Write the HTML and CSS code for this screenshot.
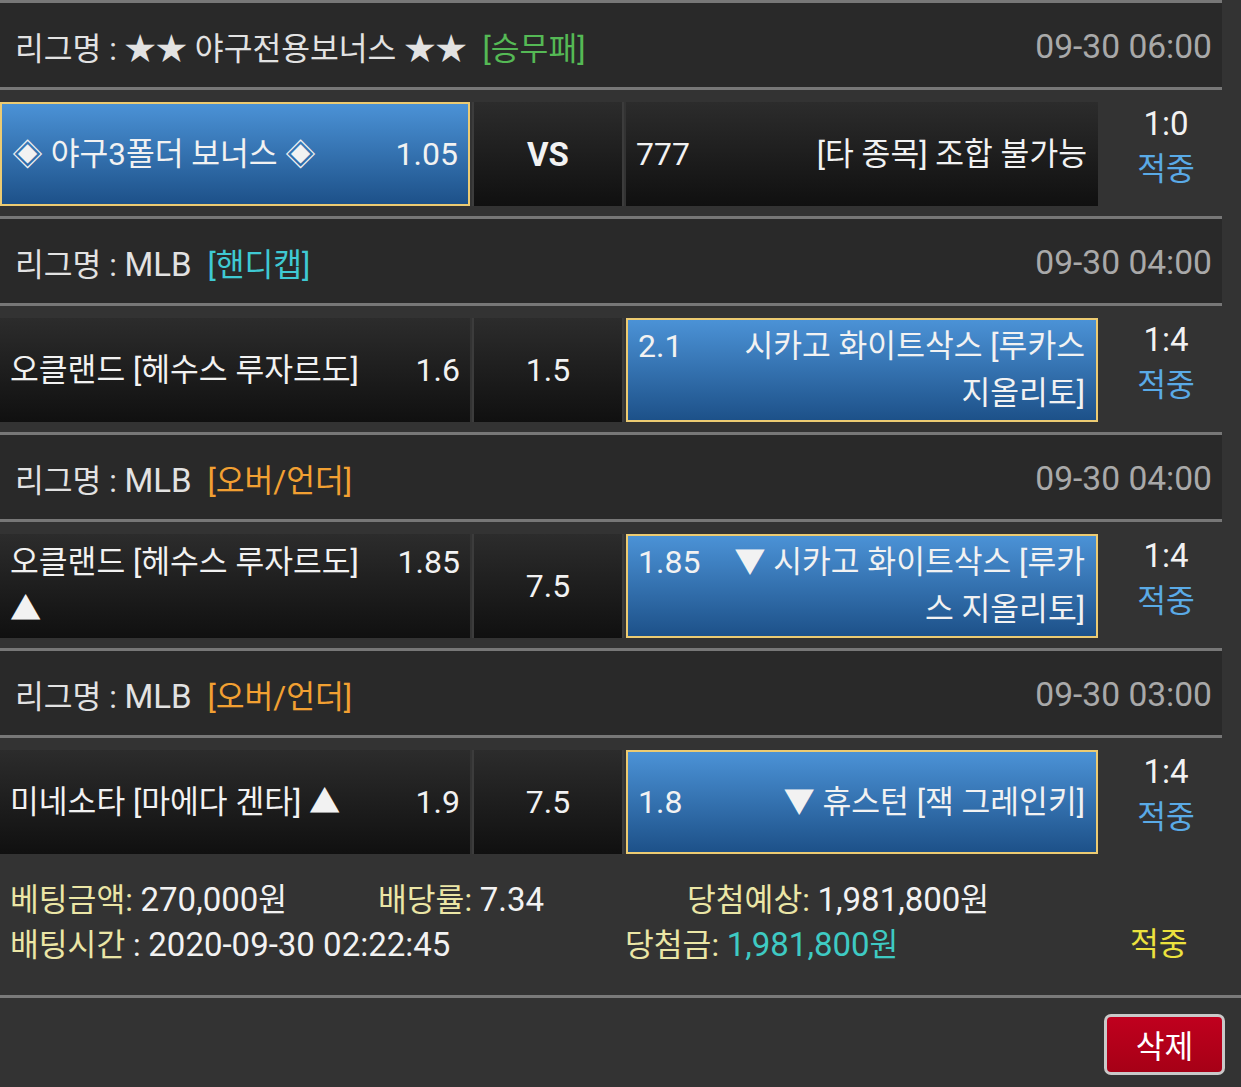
FILE: index.html
```html
<!DOCTYPE html>
<html lang="ko">
<head>
<meta charset="utf-8">
<title>베팅내역</title>
<link rel="stylesheet" href="styles.css">
</head>
<body>
<div class="slip">
  <div class="board">
    <div class="league">
      <div class="league-name">리그명 : ★★ 야구전용보너스 ★★ <span class="tag tag-green">[승무패]</span></div>
      <div class="league-date">09-30 06:00</div>
    </div>
    <div class="game">
      <div class="cell home picked">
        <div class="cell-in"><span class="odds-r">1.05</span>◈ 야구3폴더 보너스 ◈</div>
      </div>
      <div class="cell mid vs">VS</div>
      <div class="cell away">
        <div class="cell-in"><span class="odds-l">777</span>[타 종목] 조합 불가능</div>
      </div>
      <div class="score"><div class="sc">1:0</div><div class="hit">적중</div></div>
    </div>

    <div class="league">
      <div class="league-name">리그명 : <span class="lat">MLB</span> <span class="tag tag-cyan">[핸디캡]</span></div>
      <div class="league-date">09-30 04:00</div>
    </div>
    <div class="game">
      <div class="cell home">
        <div class="cell-in"><span class="odds-r">1.6</span>오클랜드 [헤수스 루자르도]</div>
      </div>
      <div class="cell mid">1.5</div>
      <div class="cell away picked">
        <div class="cell-in"><span class="odds-l">2.1</span>시카고 화이트삭스 [루카스 지올리토]</div>
      </div>
      <div class="score"><div class="sc">1:4</div><div class="hit">적중</div></div>
    </div>

    <div class="league">
      <div class="league-name">리그명 : <span class="lat">MLB</span> <span class="tag tag-orange">[오버/언더]</span></div>
      <div class="league-date">09-30 04:00</div>
    </div>
    <div class="game">
      <div class="cell home">
        <div class="cell-in"><span class="odds-r">1.85</span>오클랜드 [헤수스 루자르도] ▲</div>
      </div>
      <div class="cell mid">7.5</div>
      <div class="cell away picked">
        <div class="cell-in"><span class="odds-l">1.85</span>▼ 시카고 화이트삭스 [루카스 지올리토]</div>
      </div>
      <div class="score"><div class="sc">1:4</div><div class="hit">적중</div></div>
    </div>

    <div class="league">
      <div class="league-name">리그명 : <span class="lat">MLB</span> <span class="tag tag-orange">[오버/언더]</span></div>
      <div class="league-date">09-30 03:00</div>
    </div>
    <div class="game">
      <div class="cell home">
        <div class="cell-in"><span class="odds-r">1.9</span>미네소타 [마에다 겐타] ▲</div>
      </div>
      <div class="cell mid">7.5</div>
      <div class="cell away picked">
        <div class="cell-in"><span class="odds-l">1.8</span>▼ 휴스턴 [잭 그레인키]</div>
      </div>
      <div class="score"><div class="sc">1:4</div><div class="hit">적중</div></div>
    </div>
  </div>

  <div class="summary">
    <div class="sum-line">
      <div class="sum-a"><span class="lbl">베팅금액:</span> <span class="val">270,000</span>원</div>
      <div class="sum-b"><span class="lbl">배당률:</span> <span class="val">7.34</span></div>
      <div class="sum-c"><span class="lbl">당첨예상:</span> <span class="val">1,981,800</span>원</div>
    </div>
    <div class="sum-line">
      <div class="sum-d"><span class="lbl">배팅시간</span> : <span class="val">2020-09-30 02:22:45</span></div>
      <div class="sum-e"><span class="lbl">당첨금:</span> <span class="win"><span class="val">1,981,800</span>원</span></div>
      <div class="sum-f">적중</div>
    </div>
  </div>

  <div class="actions">
    <button class="btn-delete" type="button">삭제</button>
  </div>
</div>
</body>
</html>
```

FILE: styles.css
```css
html, body {
  margin: 0;
  padding: 0;
  background: #333333;
}

body {
  width: 1241px;
  height: 1087px;
  overflow: hidden;
  font-family: Roboto, "Noto Sans CJK KR", sans-serif;
  font-size: 31.3px;
  color: #f2f2f2;
}

.board {
  width: 1222px;
}

.league {
  box-sizing: border-box;
  height: 87px;
  border-top: 3px solid #777777;
  background: #292929;
  display: flex;
  align-items: center;
  justify-content: space-between;
  padding: 3px 10px 0 15px;
  color: #e2e2e2;
}

.lat { font-size: 33px; }

.tag { margin-left: 8px; }
.tag-green { color: #55b955; }
.tag-cyan { color: #3fc9d3; }
.tag-orange { color: #f2a032; }

.league-date {
  color: #a9a9a9;
  font-size: 33.6px;
}

.game {
  border-top: 3px solid #777777;
  padding: 12px 0 10px;
  display: flex;
  background: #333333;
}

.cell {
  height: 104px;
  box-sizing: border-box;
  display: flex;
  align-items: center;
  background: linear-gradient(#2c2c2c, #101010);
  line-height: 47px;
}

.home {
  width: 470px;
  padding: 0 10px;
}

.mid {
  width: 148px;
  margin: 0 4px;
  justify-content: center;
  font-size: 32px;
  box-shadow: -2px 0 0 #3c3c3c, 2px 0 0 #3c3c3c;
}

.away {
  width: 472px;
  padding: 0 11px 0 10px;
}

.vs {
  font-weight: bold;
  font-size: 33px;
}

.cell-in {
  width: 100%;
}

.home .cell-in { text-align: left; }
.away .cell-in { text-align: right; }

.odds-r {
  float: right;
  margin-left: 30px;
  font-size: 32px;
}

.odds-l {
  float: left;
  margin-right: 30px;
  font-size: 32px;
}

.picked {
  border: 2px solid #eccb72;
  background: linear-gradient(#4b92d6, #1d5189);
}

.score {
  width: 124px;
  height: 104px;
  box-sizing: border-box;
  text-align: center;
  line-height: 46px;
  display: flex;
  flex-direction: column;
  justify-content: center;
  padding: 0 0 14px 12px;
}

.sc { font-size: 33px; }

.hit {
  color: #5aaae6;
}

.summary {
  padding: 13px 0 28px 10px;
  line-height: 45px;
  border-bottom: 3px solid #7a7a7a;
}

.sum-line {
  display: flex;
  height: 45px;
}

.val { font-size: 33px; }

.lbl { color: #ebe6a6; }

.sum-a { width: 368px; }
.sum-b { width: 309px; }
.sum-d { width: 615px; }
.sum-e { width: 505px; }
.sum-f { color: #ece23e; }
.win { color: #3ecac3; }

.actions {
  display: flex;
  justify-content: flex-end;
  padding: 16px 16px 0 0;
}

.btn-delete {
  width: 121px;
  height: 61px;
  border: 3px solid #c9c9c9;
  border-radius: 7px;
  background: linear-gradient(#c0001e, #a60016);
  color: #ffffff;
  font-family: Roboto, "Noto Sans CJK KR", sans-serif;
  font-size: 31.3px;
  padding: 0;
}
```
